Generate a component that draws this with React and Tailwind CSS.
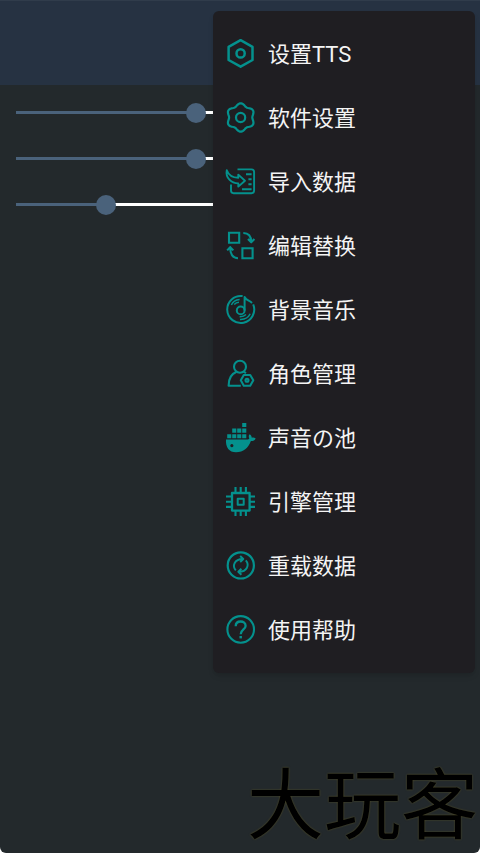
import React, { useState } from 'react';

// six soft lobes around the centre of the 30x30 icon box
const GEAR_POINTS = Array.from({ length: 90 }, (_, i) => {
  const a = (i / 90) * Math.PI * 2;
  const r = 12.9 - 1.3 * Math.cos(6 * a);
  return `${(14.7 + r * Math.cos(a)).toFixed(2)},${(14.5 + r * Math.sin(a)).toFixed(2)}`;
}).join(' ');

function Icon({ children, width = 2.1 }) {
  return (
    <svg
      viewBox="0 0 30 30"
      className="w-[30px] h-[30px] shrink-0 overflow-visible text-[#04918d]"
      fill="none"
      stroke="currentColor"
      strokeWidth={width}
      strokeLinejoin="round"
      aria-hidden="true"
    >
      {children}
    </svg>
  );
}

const TtsIcon = () => (
  <Icon width={2.5}>
    <path d="M14.6 1.2 26.5 7.8V21L14.6 27.7 2.6 21V7.8Z" />
    <circle cx="14.6" cy="14.4" r="4.1" />
  </Icon>
);

const GearIcon = () => (
  <Icon width={2.2}>
    <polygon points={GEAR_POINTS} />
    <circle cx="14.6" cy="14.5" r="4.6" />
  </Icon>
);

const ImportIcon = () => (
  <Icon width={1.9}>
    <path d="M11.5 2.4H25.5a2.6 2.6 0 0 1 2.6 2.6V23.6a2.6 2.6 0 0 1-2.6 2.6H7.6A2.6 2.6 0 0 1 5 23.6V17.5" />
    <path d="M.8 3.2C2.5 8 6.5 10.6 12.3 10.8V7.6L19 13.7 12.3 19.6V16.4C5.5 16.2-.8 11 .8 3.2Z" />
    <path d="M20 7.3H25.6M22.4 12.3H25.6M22.4 17.3H25.6M16 22.2H25.6" />
  </Icon>
);

const ReplaceIcon = () => (
  <Icon>
    <path strokeLinejoin="miter" d="M3 1.8H13.2V11.8H3ZM16.4 17.2H26.6V27.2H16.4Z" />
    <path d="M17.3 2C22.5 2 25.2 5.5 25.2 11M22 8 25.2 11.3 28.4 8" />
    <path d="M12 27.2C6.8 27.2 4.2 23.5 4.2 16.5M1.2 19.4 4.2 16.1 7.3 19.4" />
  </Icon>
);

const MusicIcon = () => (
  <Icon width={2}>
    <path d="M27.2 9.3A13.5 13.5 0 1 1 16.6 1.1" />
    <circle cx="14.7" cy="15.4" r="3.9" />
    <path d="M18.6 15.4V2C20.2 5.4 23.6 5.4 26 8" />
    <path d="M5.4 10C6.8 6.8 9.6 4.9 13.6 4.5M8.2 9.6C9.6 8 11 7.4 13 7.3M14 24.4C18.6 24.6 22.4 22.6 24.2 18.8M13.6 21.7C16.4 21.8 18.6 21 20 19.5" strokeWidth="1.5" />
  </Icon>
);

const RoleIcon = () => (
  <Icon>
    <circle cx="14" cy="7.8" r="6" />
    <path d="M10.6 12.8C5 15 2.6 19.5 2.6 26.7H14.8M17.6 12.7 20 14.2" />
    <path d="M17.8 16H24.2L27.3 21.3 24.2 26.7H17.8L14.8 21.3Z" />
    <circle cx="21" cy="21.3" r="1.5" />
  </Icon>
);

const DockerIcon = () => (
  <Icon>
    <g fill="currentColor" stroke="none">
      <path d="M16.2 0h4.1v4.1h-4.1ZM6.2 5.6h4.1v4.1h-4.1ZM11.2 5.6h4.1v4.1h-4.1ZM16.2 5.6h4.1v4.1h-4.1ZM1.2 11.2h4.1v4.1h-4.1ZM6.2 11.2h4.1v4.1h-4.1ZM11.2 11.2h4.1v4.1h-4.1ZM16.2 11.2h4.1v4.1h-4.1Z" />
      <path
        fillRule="evenodd"
        d="M0 16.5H20.5C22.2 16.5 23 16.1 23.3 15.5 22.4 13.8 22.6 12.2 23.8 11.3 25 12.2 25.7 13.4 25.8 14.7 27.3 14.3 28.6 14.6 29.6 15.4 28.8 17.4 27.2 18.2 24.9 18.1 22.2 25.2 17.5 29.3 10 29.3 3.2 29.3-.6 24.5 0 16.5ZM5.8 21.1a1.6 1.6 0 1 0 .1 0Z"
      />
    </g>
  </Icon>
);

const ChipIcon = () => (
  <Icon width={2.3}>
    <rect x="6" y="6" width="17.6" height="17.6" />
    <rect x="11.7" y="11.7" width="6" height="6" strokeWidth="2" />
    <path
      strokeWidth="2.1"
      d="M9.5 0V5M14.7 0V5M19.9 0V5M9.5 24V29M14.7 24V29M19.9 24V29M0 9.5H5M0 14.7H5M0 19.9H5M24 9.5H29M24 14.7H29M24 19.9H29"
    />
  </Icon>
);

const ReloadIcon = () => (
  <Icon width={2.2}>
    <circle cx="14.8" cy="14.4" r="13.1" />
    <path d="M9.8 19.4C6 15 8.3 8 16.8 8M14.2 5 17.3 8 14.2 11" strokeWidth="1.9" />
    <path d="M19.8 9.4C23.6 13.8 21.3 20.8 12.8 20.8M15.4 17.8 12.3 20.8 15.4 23.8" strokeWidth="1.9" />
  </Icon>
);

const HelpIcon = () => (
  <Icon>
    <circle cx="14.7" cy="14.4" r="13.3" />
    <path d="M9.7 11.3C9.7 8 11.8 6.5 14.6 6.5S19.6 8.2 19.6 10.9C19.6 14.3 14.7 14.6 14.7 19.2" strokeWidth="2.3" />
    <path d="M14.7 21V23.4" strokeWidth="2.5" />
  </Icon>
);

const MENU = [
  { label: '设置TTS', icon: TtsIcon },
  { label: '软件设置', icon: GearIcon },
  { label: '导入数据', icon: ImportIcon },
  { label: '编辑替换', icon: ReplaceIcon },
  { label: '背景音乐', icon: MusicIcon },
  { label: '角色管理', icon: RoleIcon },
  { label: '声音の池', icon: DockerIcon },
  { label: '引擎管理', icon: ChipIcon },
  { label: '重载数据', icon: ReloadIcon },
  { label: '使用帮助', icon: HelpIcon },
];

function Slider({ label, initial }) {
  const [value, setValue] = useState(initial);

  return (
    <input
      type="range"
      min="0"
      max="100"
      aria-label={label}
      value={value}
      onChange={(e) => setValue(Number(e.target.value))}
      className="block w-full h-[21px] appearance-none bg-transparent bg-no-repeat bg-center bg-size-[calc(100%-20px)_3px] [&::-webkit-slider-thumb]:appearance-none [&::-webkit-slider-thumb]:size-5 [&::-webkit-slider-thumb]:rounded-full [&::-webkit-slider-thumb]:bg-[#4a627b]"
      style={{ backgroundImage: `linear-gradient(to right, #4a627b ${value}%, #ffffff ${value}%)` }}
    />
  );
}

export default function App() {
  return (
    <div className="bg-white font-[Roboto,'Noto_Sans_CJK_SC',sans-serif]">
      <div className="relative min-h-screen flex flex-col bg-[#23292c] rounded-b-md">
        <header className="h-[85px] bg-[#263242] border-t border-[#303c4b]" />

        <main className="flex flex-col gap-[25px] pt-[17px] pl-[6px] pr-1">
          <Slider label="语速" initial={40} />
          <Slider label="音调" initial={40} />
          <Slider label="音量" initial={20} />
        </main>

        <div className="mt-auto self-end pr-0.5 text-[77px] leading-[92px] text-black whitespace-nowrap [text-shadow:0_0_2px_#5a5426]">
          大玩客
        </div>

        {/* Overflow menu */}
        <nav className="absolute top-[11px] right-[5px] w-[262px] py-[11px] rounded-md bg-[#1f1e22] shadow-md">
          {MENU.map(({ label, icon: ItemIcon }) => (
            <button
              key={label}
              type="button"
              className="w-full h-16 pl-[13px] flex items-center gap-3 text-left text-[22px] leading-8 text-[#f4f4f4] hover:bg-white/5"
            >
              <ItemIcon />
              <span className="pt-0.5">{label}</span>
            </button>
          ))}
        </nav>
      </div>
    </div>
  );
}
